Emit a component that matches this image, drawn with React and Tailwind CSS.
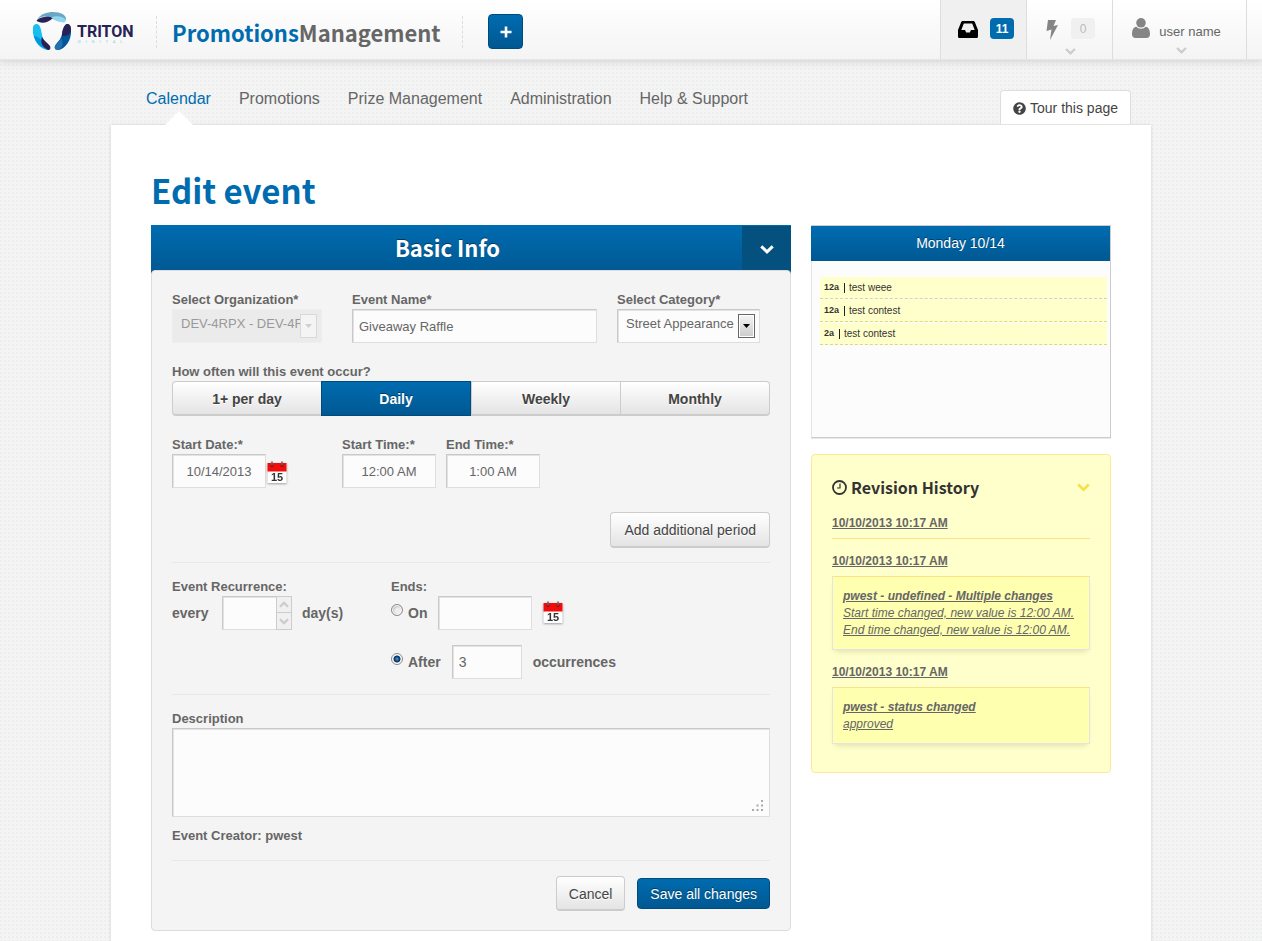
import { useState } from "react";
import { FaQuestionCircle } from "react-icons/fa";

const SOURCE = "font-['Noto_Sans_CJK_JP','Noto_Sans',sans-serif]";

const FIELD =
  "h-[34px] rounded-none border border-[#dedede] border-t-[#c9c9c9] border-l-[#c9c9c9] bg-[#fcfcfc] text-[#666] shadow-[inset_1px_1px_0_#e3e3e3] outline-none";
const LABEL = "text-[13px] leading-[18px] font-bold text-[#666]";
const GREY_BUTTON =
  "border border-[#ccc] bg-linear-to-b from-white to-[#e4e4e4] text-[#444] [text-shadow:0_1px_0_#fff]";
const BLUE = "bg-linear-to-b from-[#006cb0] to-[#005892]";

function Logo() {
  return (
    <svg viewBox="0 0 106 40" className="h-10 w-[106px]" role="img" aria-label="Triton Digital">
      <path d="M4 8C7 2 14 0 20 0c8 0 13 3 13 7 0 4-8 3-13 0C13 4 9 3 4 8z" fill="#6aa7c4" />
      <path d="M4 8c5-4 12-4 16-2-4 4-10 6-14 4-2-1-3-1-2-2z" fill="#272155" />
      <path d="M18 5.500c6-2.500 12-.5 14 1.500 3 5-5 4.500-14-1.500z" fill="#93d5ee" />
      <path d="M0 21C-1 14 1 12 3.500 12c4 0 4.500 6 5.500 11 1 6 4 8 7 11 1 3 0 4-2 4C7 37 1 29 0 21z" fill="#18bdf2" />
      <path d="M1 24c3 0 6 2 8 5 1 3 1 4 2 7C6 34 2 29 1 24z" fill="#0097dc" />
      <path d="M9 25c2 4 6 6 8 9 1 3 0 4-2 4-6-3-8-8-6-13z" fill="#272155" />
      <path d="M38 20c0-6-1-8-4-8-3 1-4 5-5 10-1 6-5 8-7 12-1 3 1 4 4 4 7-2 12-10 12-18z" fill="#00559b" />
      <path d="M38 19c0-5-1-7-4-7-3 1-5 6-5 12 5 0 8-1 9-5z" fill="#272155" />
      <path d="M28 26c-1 4-5 6-6 8-1 3 1 4 4 4 4-3 5-8 2-12z" fill="#2270ae" />
      <text x="44" y="25" fontFamily="Roboto, sans-serif" fontWeight="700" fontSize="16" fill="#272155">TRITON</text>
      <text x="45" y="31" fontFamily="Roboto, sans-serif" fontSize="4" letterSpacing="5" fill="#7fcbe9">DIGITAL</text>
    </svg>
  );
}

function Chevron({ className }) {
  return (
    <svg viewBox="0 0 14 9" className={className} aria-hidden="true">
      <path d="M1.300 1.300 7 6.800l5.700-5.500" fill="none" stroke="currentColor" strokeWidth="3" />
    </svg>
  );
}

function InboxIcon() {
  return (
    <svg viewBox="0 0 20 17" className="h-[17px] w-5" aria-hidden="true">
      <path
        fillRule="evenodd"
        fill="#000"
        d="M5 0h10c1 0 1.500.4 1.900 1.200L20 9v6.500c0 .9-.5 1.500-1.400 1.500H1.400C.5 17 0 16.400 0 15.500V9l3.100-7.800C3.500.4 4 0 5 0zM5.800 2.500 3.300 9H7l1.200 2.600h3.600L13 9h3.700l-2.500-6.500z"
      />
    </svg>
  );
}

function UserIcon() {
  return (
    <svg viewBox="0 0 18 20" className="h-5 w-[18px] text-[#858585]" aria-hidden="true">
      <circle cx="9" cy="4.800" r="4.800" fill="currentColor" />
      <path d="M4.300 8.800C1.200 9.300 0 12.500 0 16c0 2.500 1.300 4 3.500 4h11c2.200 0 3.500-1.500 3.500-4 0-3.500-1.200-6.700-4.300-7.200C12.500 10 11 10.700 9 10.700S5.500 10 4.300 8.800z" fill="currentColor" />
    </svg>
  );
}

function ClockIcon() {
  return (
    <svg viewBox="0 0 15 15" className="h-[15px] w-[15px]" aria-hidden="true">
      <circle cx="7.500" cy="7.500" r="6.500" fill="none" stroke="#333" strokeWidth="1.800" />
      <path d="M8 3.500v4.500H5" fill="none" stroke="#333" strokeWidth="1.200" />
    </svg>
  );
}

function CalendarButton({ label }) {
  return (
    <button type="button" aria-label={label} className="h-6 w-5">
      <svg viewBox="0 0 20 24" className="h-6 w-5 drop-shadow-[0_1px_1px_rgba(0,0,0,0.35)]" aria-hidden="true">
        <rect x="0.500" y="2" width="19" height="20" fill="#fff" />
        <rect x="0.500" y="2" width="19" height="8.500" fill="#f20d0d" />
        <circle cx="5" cy="4.500" r="1.500" fill="#8a1010" />
        <circle cx="15" cy="4.500" r="1.500" fill="#8a1010" />
        <path d="M5 .5v4M15 .5v4" stroke="#666" strokeWidth="1.600" />
        <text x="10" y="20" textAnchor="middle" fontSize="11" fontWeight="700" fontFamily="'Liberation Sans', sans-serif" fill="#333">15</text>
      </svg>
    </button>
  );
}

function Header() {
  return (
    <header className="relative flex h-15 justify-between border-b border-[#e6e6e6] bg-linear-to-b from-white to-[#f4f4f4] shadow-[0_2px_8px_rgba(0,0,0,0.12)]">
      <div className="flex items-center pt-1 pl-[33px]">
        <Logo />
        <div className="ml-[17px] h-8 border-l border-dashed border-[#ddd]" />
        <div className={`ml-[15px] text-[22px] leading-[30px] font-bold text-[#666] ${SOURCE}`}>
          <span className="text-[#006cb0]">Promotions</span>Management
        </div>
        <div className="ml-[21px] h-8 border-l border-dashed border-[#ddd]" />
        <button type="button" aria-label="Add" className={`ml-[25px] flex h-[35px] w-[35px] items-center justify-center rounded border border-[#004a7c] pl-[2px] ${BLUE}`}>
          <svg viewBox="0 0 12 12" className="h-3 w-3" aria-hidden="true">
            <path d="M6 .5v11M.5 6h11" stroke="#fff" strokeWidth="2.600" />
          </svg>
        </button>
      </div>
      <div className="mr-[15px] flex border-r border-[#ddd]">
        <button type="button" aria-label="Inbox" className="flex w-[86px] justify-end gap-3 border-l border-[#ddd] bg-[#f0f0f0] pt-[18px] pr-3">
          <span className="pt-[3px]"><InboxIcon /></span>
          <span className="h-[21px] w-6 rounded bg-[#006cb0] pt-px text-center text-[12px] leading-5 font-bold text-white">11</span>
        </button>
        <button type="button" aria-label="Activity" className="flex w-[86px] flex-col items-center border-l border-[#ddd] pt-[18px] pl-[2px]">
          <span className="flex gap-[13px]">
            <svg viewBox="0 0 12 20" className="mt-[2px] h-5 w-3" aria-hidden="true">
              <path d="M2 0h8L7.500 6 12 5 4 20l1.500-10.500L.5 11z" fill="#858585" />
            </svg>
            <span className="h-[21px] w-6 rounded bg-[#f0f0f0] pt-px text-center text-[12px] leading-5 text-[#bbb]">0</span>
          </span>
          <Chevron className="mt-2 h-[7px] w-[11px] text-[#ccc]" />
        </button>
        <button type="button" className="flex w-[134px] flex-col items-center border-l border-[#ddd] pt-[18px] pl-[3px]">
          <span className="flex gap-[9px] pr-[9px]">
            <UserIcon />
            <span className="pt-[5px] text-[13px] leading-[18px] text-[#666]">user name</span>
          </span>
          <Chevron className="mt-[6px] h-[7px] w-[11px] text-[#ccc]" />
        </button>
      </div>
    </header>
  );
}

const NAV = ["Calendar", "Promotions", "Prize Management", "Administration", "Help & Support"];

function Nav() {
  return (
    <div className="mx-auto flex h-[65px] max-w-[1040px] items-end justify-between px-5">
      <nav className="flex gap-7 self-start pt-[29px] pl-[15px]">
        {NAV.map((item, i) => (
          <a key={item} href="#" className={`relative text-[16px] leading-5 ${i === 0 ? "text-[#006cb0]" : "text-[#666]"}`}>
            {item}
            {i === 0 && (
              <span className="absolute top-[22px] left-[19px] border-x-[14px] border-b-[14px] border-x-transparent border-b-white" />
            )}
          </a>
        ))}
      </nav>
      <button type="button" className="mb-px flex h-[34px] items-center gap-1 rounded-t border border-b-0 border-[#ddd] bg-white px-3 pt-px text-[14px] text-[#444]">
        <FaQuestionCircle className="h-[13px] w-[13px]" />
        Tour this page
      </button>
    </div>
  );
}

function Arrow({ disabled }) {
  return (
    <span className={`pointer-events-none absolute top-[5px] right-[5px] flex h-6 w-[17px] items-center justify-center border ${disabled ? "border-[#d9d9d9] bg-[#f4f4f4]" : "border-[#666] bg-linear-to-b from-[#f5f5f5] to-[#ccc] shadow-[inset_0_0_0_1px_#fff]"}`}>
      <svg viewBox="0 0 7 4" className="h-1 w-[7px]" aria-hidden="true">
        <path d="M0 0h7L3.500 4z" fill={disabled ? "#ccd0d3" : "#000"} />
      </svg>
    </span>
  );
}

const FREQUENCIES = ["1+ per day", "Daily", "Weekly", "Monthly"];

function Radio({ id, checked, onChange }) {
  return (
    <input
      id={id}
      type="radio"
      name="ends"
      checked={checked}
      onChange={onChange}
      className="mt-2 mr-[5px] h-3 w-3 appearance-none rounded-full border border-[#8a8a8a] bg-[radial-gradient(circle_at_60%_60%,#eee_30%,#bbb_70%)] shadow-[inset_0_0_0_1px_#fff] checked:bg-[radial-gradient(circle,#35a6e0_0,#0b2a5c_3px,#f4f4f4_4px)]"
    />
  );
}

function BasicInfo() {
  const [frequency, setFrequency] = useState("Daily");
  const [ends, setEnds] = useState("after");
  return (
    <section className="min-w-0 flex-1">
      <div className={`flex h-[49px] ${BLUE}`}>
        <h2 className={`flex-1 pl-[2px] text-center text-[22px] leading-[45px] font-bold text-white [text-shadow:0_-1px_0_#003a60] ${SOURCE}`}>Basic Info</h2>
        <button type="button" aria-label="Collapse Basic Info" className="mt-px flex h-11 w-[49px] items-center justify-center bg-[#04517f] pt-[2px] text-white">
          <Chevron className="h-[9px] w-[14px]" />
        </button>
      </div>
      <form onSubmit={(e) => e.preventDefault()} className="relative -mt-1 rounded border border-[#dcdcdc] bg-[#f4f4f4] px-5 pt-5 pb-[19px]">
        <div className="flex gap-5">
          <div className="w-[160px]">
            <label htmlFor="org" className={`block ${LABEL}`}>Select Organization*</label>
            <div className="relative w-[150px]">
              <select id="org" disabled className="h-[34px] w-full appearance-none border border-[#eee] bg-[#ebebeb] pr-5 pb-[5px] pl-2 text-[13px] text-[#999] opacity-100">
                <option>DEV-4RPX - DEV-4RPX</option>
              </select>
              <Arrow disabled />
            </div>
          </div>
          <div className="flex-1">
            <label htmlFor="name" className={`block ${LABEL}`}>Event Name*</label>
            <input id="name" type="text" defaultValue="Giveaway Raffle" className={`w-full px-[6px] text-[13px] ${FIELD}`} />
          </div>
          <div className="w-[153px]">
            <label htmlFor="category" className={`block ${LABEL}`}>Select Category*</label>
            <div className="relative w-[143px]">
              <select id="category" className={`w-full appearance-none pr-5 pb-[5px] pl-2 text-[13px] ${FIELD}`}>
                <option>Street Appearance</option>
              </select>
              <Arrow />
            </div>
          </div>
        </div>

        <fieldset className="mt-5">
          <legend className={LABEL}>How often will this event occur?</legend>
          <div className="flex h-[35px]">
            {FREQUENCIES.map((item) => (
              <button
                key={item}
                type="button"
                aria-pressed={frequency === item}
                onClick={() => setFrequency(item)}
                className={`flex-1 text-[14px] font-bold first:rounded-l last:rounded-r ${
                  frequency === item
                    ? `border border-[#004a7c] pt-px text-white [text-shadow:0_-1px_0_#003a60] ${BLUE}`
                    : `border-r-0 border-b-2 pt-[2px] last:border-r ${GREY_BUTTON}`
                }`}
              >
                {item}
              </button>
            ))}
          </div>
        </fieldset>

        <div className="mt-5 flex">
          <div className="w-[170px]">
            <label htmlFor="start-date" className={`block ${LABEL}`}>Start Date:*</label>
            <div className="flex items-center gap-px">
              <input id="start-date" type="text" defaultValue="10/14/2013" className={`w-[94px] text-center text-[13px] ${FIELD}`} />
              <span className="flex pt-[3px]"><CalendarButton label="Pick start date" /></span>
            </div>
          </div>
          <div className="mr-[10px]">
            <label htmlFor="start-time" className={`block ${LABEL}`}>Start Time:*</label>
            <input id="start-time" type="text" defaultValue="12:00 AM" className={`w-[94px] text-center text-[13px] ${FIELD}`} />
          </div>
          <div>
            <label htmlFor="end-time" className={`block ${LABEL}`}>End Time:*</label>
            <input id="end-time" type="text" defaultValue="1:00 AM" className={`w-[94px] text-center text-[13px] ${FIELD}`} />
          </div>
        </div>

        <div className="mt-6 flex justify-end border-b border-[#e8e8e8] pb-[14px]">
          <button type="button" className={`h-9 rounded border-b-2 px-[13px] pt-px text-[14px] ${GREY_BUTTON}`}>Add additional period</button>
        </div>

        <div className="flex border-b border-[#e8e8e8] pt-[15px] pb-[15px]">
          <div className="w-[219px]">
            <label htmlFor="every" className={`block ${LABEL}`}>Event Recurrence:</label>
            <div className="flex text-[14px] leading-[34px] font-bold text-[#666]">
              <span className="w-[50px]">every</span>
              <span className="mr-[10px] flex">
                <input id="every" type="text" className={`w-[54px] border-r-0 px-[6px] font-normal ${FIELD}`} />
                <span className="flex w-4 flex-col">
                  <button type="button" aria-label="Increase" className="flex h-[17px] items-center justify-center border border-[#ccc] bg-[#f0f0f0] text-[#ccc]">
                    <Chevron className="h-[7px] w-[10px] rotate-180" />
                  </button>
                  <button type="button" aria-label="Decrease" className="flex h-[17px] items-center justify-center border border-t-0 border-[#ccc] bg-[#f0f0f0] text-[#ccc]">
                    <Chevron className="h-[7px] w-[10px]" />
                  </button>
                </span>
              </span>
              <span>day(s)</span>
            </div>
          </div>
          <fieldset>
            <legend className={LABEL}>Ends:</legend>
            <div className="flex text-[14px] leading-[34px] font-bold text-[#666]">
              <Radio id="ends-on" checked={ends === "on"} onChange={() => setEnds("on")} />
              <label htmlFor="ends-on" className="mr-[11px]">On</label>
              <input type="text" aria-label="End date" className={`mr-[11px] w-[94px] px-[6px] font-normal ${FIELD}`} />
              <span className="flex items-center"><CalendarButton label="Pick end date" /></span>
            </div>
            <div className="mt-[15px] flex text-[14px] leading-[34px] font-bold text-[#666]">
              <Radio id="ends-after" checked={ends === "after"} onChange={() => setEnds("after")} />
              <label htmlFor="ends-after" className="mr-[11px]">After</label>
              <input type="text" aria-label="Number of occurrences" defaultValue="3" className={`mr-[11px] w-[70px] px-[6px] font-normal ${FIELD}`} />
              <span>occurrences</span>
            </div>
          </fieldset>
        </div>

        <label htmlFor="description" className={`mt-[15px] block ${LABEL}`}>Description</label>
        <div className="relative">
          <textarea id="description" className="block h-[89px] w-full resize-none border border-[#dedede] border-t-[#c9c9c9] border-l-[#c9c9c9] bg-[#fcfcfc] p-2 text-[13px] text-[#666] shadow-[inset_1px_1px_0_#e3e3e3] outline-none" />
          <svg viewBox="0 0 13 13" className="pointer-events-none absolute right-[6px] bottom-[5px] h-[13px] w-[13px]" aria-hidden="true">
            <path d="M10 1h2v2h-2zM5.500 5.500h2v2h-2zM10 5.500h2v2h-2zM1 10h2v2H1zM5.500 10h2v2h-2zM10 10h2v2h-2z" fill="#aaa" />
          </svg>
        </div>
        <p className={`mt-[10px] ${LABEL}`}>Event Creator: pwest</p>

        <div className="mt-[15px] flex items-center justify-end gap-3 border-t border-[#e8e8e8] pt-[15px]">
          <button type="button" className={`h-[35px] rounded border-b-2 px-3 pt-[2px] text-[14px] ${GREY_BUTTON}`}>Cancel</button>
          <button type="submit" className={`h-[31px] rounded border border-[#004a7c] px-3 pt-px text-[14px] text-white [text-shadow:0_-1px_0_#003a60] ${BLUE}`}>Save all changes</button>
        </div>
      </form>
    </section>
  );
}

const EVENTS = [
  ["12a", "test weee"],
  ["12a", "test contest"],
  ["2a", "test contest"],
];

const REVISIONS = [
  { title: "pwest - undefined - Multiple changes", lines: ["Start time changed, new value is 12:00 AM.", "End time changed, new value is 12:00 AM."] },
  { title: "pwest - status changed", lines: ["approved"] },
];

function Sidebar() {
  return (
    <aside className="w-[300px] shrink-0">
      <section className="h-[213px] border border-[#ccc] border-l-[#e4e4e4] bg-[#fcfcfc] shadow-[0_1px_0_#e8e8e8]">
        <h2 className={`-ml-px h-[35px] text-center text-[14px] leading-[35px] text-white [text-shadow:0_-1px_0_#003a60] ${BLUE}`}>Monday 10/14</h2>
        <ul className="mt-4 mr-[3px] ml-2 space-y-px">
          {EVENTS.map(([time, name], i) => (
            <li key={i} className="flex h-[22px] items-center border-b border-dashed border-[#d8d886] bg-[#ffffcb] px-1 text-[#333]">
              <b className="text-[9px]">{time}</b>
              <span className="mr-1 ml-[5px] h-[10px] w-px bg-[#222]" />
              <span className="text-[10px]">{name}</span>
            </li>
          ))}
        </ul>
      </section>

      <section className="mt-4 rounded border border-[#fde995] bg-[#ffffcb] px-5 pt-[21px] pb-7 text-[12px] leading-[17px] text-[#666]">
        <div className="flex h-[22px] items-center justify-between">
          <h2 className={`flex items-center gap-1 text-[16px] font-bold text-[#333] ${SOURCE}`}>
            <ClockIcon />
            Revision History
          </h2>
          <button type="button" aria-label="Collapse Revision History" className="text-[#f8df4e]">
            <Chevron className="h-[9px] w-[13px]" />
          </button>
        </div>
        <a href="#" className="mt-[17px] block border-b border-[#fde283] pb-[6px] font-bold underline">10/10/2013 10:17 AM</a>
        {REVISIONS.map((rev) => (
          <a key={rev.title} href="#" className="mt-[14px] block underline">
            <b>10/10/2013 10:17 AM</b>
            <div className="mt-[6px] border border-[#e4e4e4] border-t-[#fde283] bg-[#ffffb0] px-[10px] pt-[11px] pb-[10px] italic shadow-[0_4px_6px_-3px_rgba(0,0,0,0.15)]">
              <b className="block">{rev.title}</b>
              {rev.lines.map((line) => (
                <span key={line} className="block">{line}</span>
              ))}
            </div>
          </a>
        ))}
      </section>
    </aside>
  );
}

export default function App() {
  return (
    <div className="min-h-screen bg-[#f4f4f4] bg-[radial-gradient(circle_at_1px_1px,#edeeee_1px,transparent_1px)] bg-[length:4px_4px] font-['Liberation_Sans',Arial,sans-serif]">
      <Header />
      <Nav />
      <main className="mx-auto max-w-[1040px] bg-white px-10 pt-10 pb-10 shadow-[0_0_3px_rgba(0,0,0,0.15)]">
        <h1 className={`text-[33px] leading-[50px] font-bold text-[#006cb0] ${SOURCE}`}>Edit event</h1>
        <div className="mt-[10px] flex items-start gap-5">
          <BasicInfo />
          <Sidebar />
        </div>
      </main>
    </div>
  );
}
